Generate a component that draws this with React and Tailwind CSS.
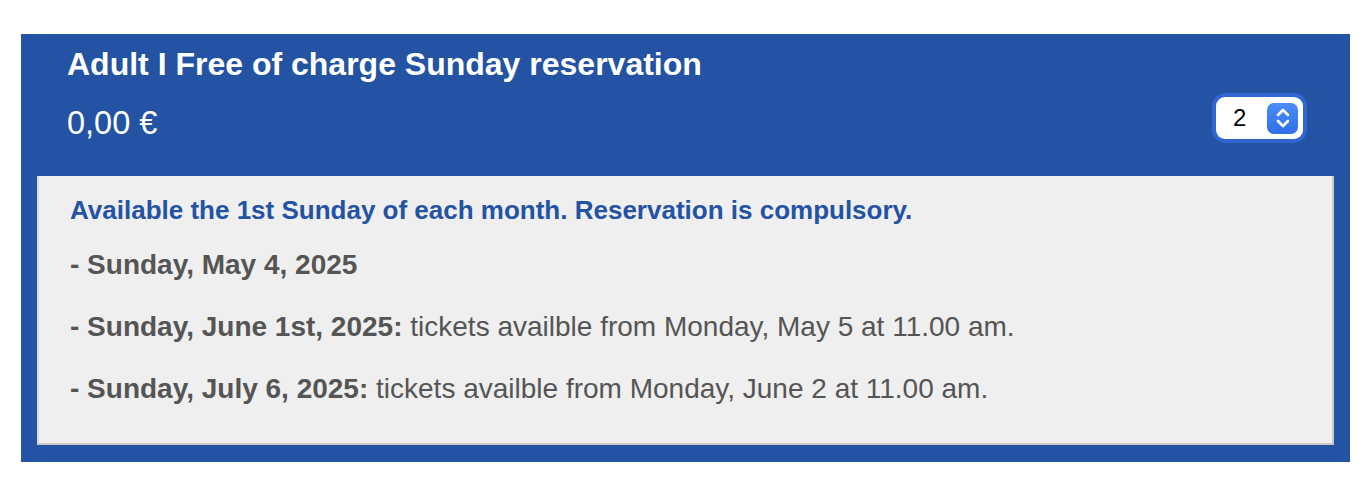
export default function App() {
  const font = { fontFamily: '"Liberation Sans", Arial, Helvetica, sans-serif' };
  return (
    <div className="w-[1372px] h-[482px] bg-white pt-[34px] pl-[21px]" style={font}>
      <div className="w-[1329px] h-[428px] bg-[#2353a2] flex flex-col">
        <div className="h-[142px] flex items-start justify-between pl-[46px] pr-[43px] pt-[12px]">
          <div className="flex flex-col">
            <div className="text-white font-bold text-[32px] leading-[36px]">
              Adult I Free of charge Sunday reservation
            </div>
            <div className="text-white text-[32.5px] leading-[36px] mt-[23px]">0,00&nbsp;€</div>
          </div>
          <div className="mt-[47px] rounded-[13px] bg-[#3165cf] p-[4px]">
            <div className="w-[87px] h-[42px] bg-white rounded-[9px] flex items-center justify-between pl-[17px] pr-[5px]">
              <span className="text-black text-[24px] leading-none">2</span>
              <div className="w-[31px] h-[31px] rounded-[7px] bg-gradient-to-b from-[#4a8cf7] to-[#2f6fe8] flex items-center justify-center">
                <svg width="16" height="24" viewBox="0 0 16 24" fill="none" stroke="white" strokeWidth="2.6" strokeLinecap="round" strokeLinejoin="round">
                  <path d="M3 9 L8 4 L13 9" />
                  <path d="M3 15 L8 20 L13 15" />
                </svg>
              </div>
            </div>
          </div>
        </div>
        <div className="mx-[16px] h-[269px] bg-[#efefef] border-l-2 border-l-[#d6dae3] border-r-2 border-r-[#c9c9c9] border-b-2 border-b-[#c9c9c9] pl-[31px] pt-[19px]">
          <div className="text-[#2353a2] font-bold text-[26px] leading-[30px]">
            Available the 1st Sunday of each month. Reservation is compulsory.
          </div>
          <div className="text-[#555555] text-[28px] leading-[32px] mt-[24px]">
            <span className="font-bold">- Sunday, May 4, 2025</span>
          </div>
          <div className="text-[#555555] text-[28px] leading-[32px] mt-[30px]">
            <span className="font-bold">- Sunday, June 1st, 2025:</span> tickets availble from Monday, May 5 at 11.00 am.
          </div>
          <div className="text-[#555555] text-[28px] leading-[32px] mt-[30px]">
            <span className="font-bold">- Sunday, July 6, 2025:</span> tickets availble from Monday, June 2 at 11.00 am.
          </div>
        </div>
      </div>
    </div>
  );
}
